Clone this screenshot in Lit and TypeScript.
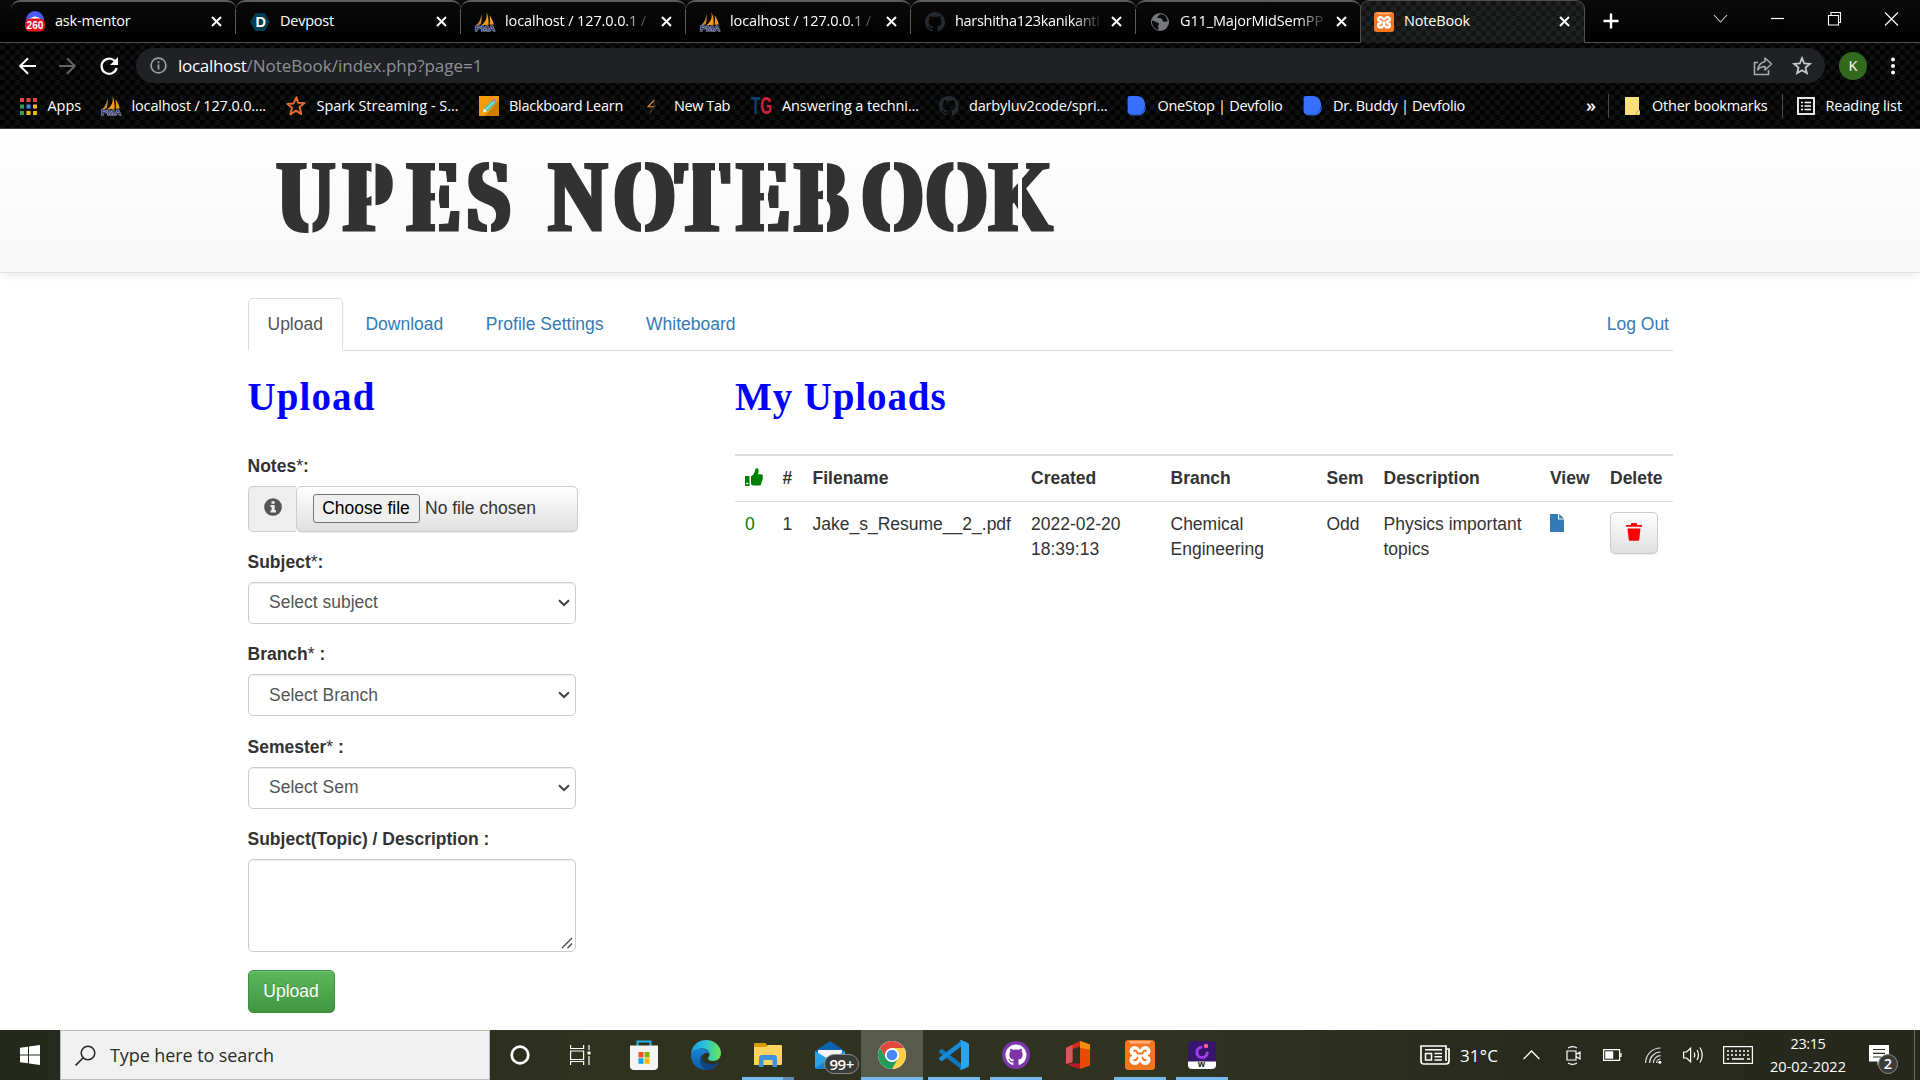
import { LitElement, html, svg, css } from "lit";
import { customElement } from "lit/decorators.js";

/** Base element: spreads the letters of every [data-w] label over its given width. */
class FittedElement extends LitElement {
  firstUpdated() {
    this.renderRoot.querySelectorAll<HTMLElement>("[data-w]").forEach((el) => {
      const want = Number(el.dataset.w);
      const has = el.getBoundingClientRect().width;
      const count = (el.textContent || "").length;
      el.style.letterSpacing = `${(want - has) / count}px`;
    });
  }
}

const fit = (text: string, w: number) => html`<span class="fit" data-w=${w}>${text}</span>`;
const icon = (w: number, h: number, box: string, body: unknown) =>
  html`<svg width=${w} height=${h} viewBox=${box} fill="none">${body}</svg>`;

/* ---------- shared icons ---------- */
const octocat = svg`<path d="M8 0C3.58 0 0 3.58 0 8c0 3.54 2.29 6.53 5.47 7.59.4.07.55-.17.55-.38 0-.19-.01-.82-.01-1.49-2.01.37-2.53-.49-2.69-.94-.09-.23-.48-.94-.82-1.13-.28-.15-.68-.52-.01-.53.63-.01 1.08.58 1.23.82.72 1.21 1.87.87 2.33.66.07-.52.28-.87.51-1.07-1.78-.2-3.64-.89-3.64-3.95 0-.87.31-1.59.82-2.15-.08-.2-.36-1.02.08-2.12 0 0 .67-.21 2.2.82.64-.18 1.32-.27 2-.27s1.36.09 2 .27c1.53-1.04 2.2-.82 2.2-.82.44 1.1.16 1.92.08 2.12.51.56.82 1.27.82 2.15 0 3.07-1.87 3.75-3.65 3.95.29.25.54.73.54 1.48 0 1.07-.01 1.93-.01 2.2 0 .21.15.46.55.38A8.01 8.01 0 0 0 16 8c0-4.42-3.58-8-8-8z" fill="currentColor"/>`;

const pma = () => icon(20, 20, "0 0 20 20", svg`
  <path d="M6 1.5C6.3 6 5 10 1 13.2L5.6 12.6C7 9 7 5 6 1.5z" fill="#c98b35"/>
  <path d="M11.3 0C12.4 5 11.6 9 6.4 13.2L13.6 12.8C13.8 8 13.3 3.400 11.3 0z" fill="#f89c0e"/>
  <path d="M14.400 3C16.500 6 18.400 9.500 18.800 12.6L14.6 12.8C15.2 9.500 15 6 14.4 3z" fill="#e8982a"/>
  <text x="0" y="19.400" font-family="Liberation Sans" font-weight="bold" font-size="8" textLength="20" lengthAdjust="spacingAndGlyphs" fill="#343b70" stroke="#b4b8d8" stroke-width=".9" paint-order="stroke">PMA</text>`);

const xampp = (s: number, h: number) => icon(s, h, "0 0 30 30", svg`
  <rect width="30" height="30" rx="3.500" fill="#f4761e"/><path d="M3 1h24l-3 2.500H6z" fill="#fbb27c"/>
  <circle cx="9.800" cy="11.200" r="5.300" fill="#fff"/><circle cx="20.200" cy="11.200" r="5.300" fill="#fff"/>
  <circle cx="9.800" cy="19.800" r="5.300" fill="#fff"/><circle cx="20.200" cy="19.800" r="5.300" fill="#fff"/>
  <path d="M10 10.500h10v10H10z" fill="#fff"/>
  <path d="M9 10.800q3-.5 3.500 2.700h5q.5-3.200 3.500-2.700M9 20.200q3 .5 3.500-2.700M21 20.200q-3 .5-3.500-2.700" stroke="#f4761e" stroke-width="1.800" stroke-linecap="round"/>
  <path d="M4 15.500h3M23 15.500h3" stroke="#f4761e" stroke-width="1.600"/>`);

const devfolio = () => icon(20, 20, "0 0 20 20", svg`
  <path d="M1.500 16.500h9.500c5 0 7.500-4 7.700-7.500C19.800 16 15.500 19.600 11 19.600H5.500C3.500 19.600 2 18.500 1.500 16.500z" fill="#2d5fd8"/>
  <path d="M.6 2C.6.8 1.500 0 2.600 0h7.200c5.200 0 8.300 4 8.300 8.800S15 17.800 9.800 17.800H2.600c-1.100 0-2-.9-2-2z" fill="#3770ff"/>`);

const cross = () => icon(11, 11, "0 0 11 11", svg`<path d="M1 1l9 9M10 1l-9 9" stroke="#fff" stroke-width="2"/>`);

/* ---------- browser chrome ---------- */
const favicons: Record<string, () => unknown> = {
  mentor: () => icon(20, 21, "0 0 20 21", svg`<circle cx="10" cy="9" r="9" fill="#4a5cf0"/><path d="M4 8q6-5 12 0z" fill="#fff"/>
    <rect x="0" y="7.600" width="20" height="13" rx="5" fill="#de1220"/>
    <text x="1.600" y="18.300" font-family="Liberation Sans" font-size="11" font-weight="bold" fill="#fff" textLength="16.800" lengthAdjust="spacingAndGlyphs">260</text>`),
  devpost: () => icon(20, 20, "0 0 20 20", svg`<path d="M5.300 1h9.400L20 10l-5.300 9H5.300L0 10z" fill="#003e54"/>
    <text x="5.400" y="15.200" font-family="Liberation Sans" font-size="14.500" font-weight="bold" fill="#fff">D</text>`),
  pma,
  github: () => html`<span class="gh">${icon(20, 20, "0 0 16 16", octocat)}</span>`,
  globe: () => icon(20, 20, "0 0 20 20", svg`<circle cx="10" cy="10" r="9" fill="#75797e"/>
    <path d="M2 8.500c3 .2 3.500 2 6 2.300 1.500.4 1 2.200 0 2.700l.6 4.200C4 17.500 1.500 13 2 8.500zM9.500 2.500c-.2 1.500-2 1.300-2.300 3 .6 1.400 3 .3 4.300 1.200 1.400 1 .6 2.800 2.500 3.100 1.300.2 2.500-.6 3.600-.2C17.500 5 14 1.600 9.500 2.500z" fill="#0a0a0a"/>`),
  xampp: () => xampp(20, 20),
};

const tabs: [string, string, number][] = [
  ["mentor", "ask-mentor", 75.5],
  ["devpost", "Devpost", 54],
  ["pma", "localhost / 127.0.0.1 /", 141],
  ["pma", "localhost / 127.0.0.1 /", 141],
  ["github", "harshitha123kanikanti", 144.5],
  ["globe", "G11_MajorMidSemPP", 143],
  ["xampp", "NoteBook", 66],
];

const marks: [() => unknown, string, number, number][] = [
  [() => icon(17, 17, "0 0 17 17", [["#e8453c", 0, 0], ["#e8453c", 6.5, 0], ["#e8453c", 13, 0], ["#2aa652", 0, 6.5], ["#4285f4", 6.5, 6.5], ["#f7b80e", 13, 6.5], ["#2aa652", 0, 13], ["#f7b80e", 6.500, 13], ["#f7b80e", 13, 13]].map(
    ([c, x, y]) => svg`<rect x=${x} y=${y} width="4" height="4" fill=${c}/>`)), "Apps", 33.5, 81.5],
  [pma, "localhost / 127.0.0....", 134.5, 185],
  [() => icon(20, 20, "0 0 20 20", svg`<path d="M10.500 1.200l1.600 5.500 6.400.2-5 4.200 1.800 7-5.300-3.500-5.600 3.800 1.600-6.700L1.500 8l6-.6z" stroke="#e06a32" stroke-width="2" stroke-linejoin="round"/>`), "Spark Streaming - S...", 142, 192.5],
  [() => icon(20, 20, "0 0 20 20", svg`<rect width="20" height="20" fill="#f79a0a"/><path d="M20 4v16H6z" fill="#cf7c00"/><path d="M4 16.500l1-4L13.500 4l3 3L8 15.500z" fill="#3fc7b4"/><path d="M13.500 4l1.500-1.500 3 3L16.500 7z" fill="#b678d6"/><path d="M4 16.500l1-4 3 3z" fill="#fff"/><path d="M6.500 14l8.500-8.500" stroke="#d8fff7" stroke-width="1"/>`), "Blackboard Learn", 114, 165],
  [() => icon(20, 20, "0 0 20 20", svg`<path d="M10.500 4L4 10.800h6" stroke="#d9973a" stroke-width="1.100"/><path d="M10.500 4l-.8 5.500h2L6 17.500l1.600-6.500" stroke="#4c3a28" stroke-width=".9"/>`), "New Tab", 56, 107],
  [() => icon(21, 20, "0 0 21 20", svg`<text x="0" y="17.600" font-family="Liberation Sans" font-weight="bold" font-size="23" fill="#123f73" textLength="21" lengthAdjust="spacingAndGlyphs">T<tspan fill="#d3203f">G</tspan></text>`), "Answering a techni...", 137, 188],
  [() => html`<span class="gh">${icon(20, 20, "0 0 16 16", octocat)}</span>`, "darbyluv2code/spri...", 138.500, 188.5],
  [devfolio, "OneStop | Devfolio", 125, 175.5],
  [devfolio, "Dr. Buddy | Devfolio", 132, 283.5],
];

@customElement("browser-chrome")
export class BrowserChrome extends FittedElement {
  static styles = css`
    :host { display: block; height: 129px; box-sizing: border-box; color: #fff; border-bottom: 1px solid #3a3a3a;
      font: 14.5px/20px "Open Sans", "Noto Sans", sans-serif; background: #050505 conic-gradient(#0e0f0f 25%, #030303 0 50%, #0e0f0f 0 75%, #030303 0) 0 0 / 10px 10px; }
    svg { display: block; flex: none; overflow: visible; }
    .fit { display: inline-block; white-space: pre; }
    .strip { display: flex; height: 42px; border-bottom: 1px solid #505050; background: #000 linear-gradient(#0a0a0a, #000); }
    .tabs { display: flex; padding-left: 11px; }
    .tab { display: flex; align-items: center; width: 225px; height: 42px; box-sizing: border-box; padding: 0 0 1px 14px; border-top: 2px solid #5c5c5c; border-radius: 9px 9px 0 0; }
    .tab:nth-child(n+2):nth-child(-n+6) .edge { background: #5a5a5a; }
    .edge { width: 1px; height: 25px; margin-left: -15px; margin-right: 14px; flex: none; }
    .name { flex: none; width: 146px; margin-left: 10px; white-space: nowrap; height: 21px; }
    .fade { -webkit-mask-image: linear-gradient(90deg, #000 118px, transparent 148px); mask-image: linear-gradient(90deg, #000 118px, transparent 148px); }
    .tab > svg:last-child { margin-left: 9.5px; }
    .active { height: 43px; border: 1px solid #505050; border-bottom: 0; border-radius: 9px 9px 0 0; margin-left: -1px; padding-top: 0; padding-left: 13px;
      background: #111 conic-gradient(#202222 25%, #141515 0 50%, #202222 0 75%, #141515 0) 0 0 / 10px 10px; }
    .active .edge { visibility: hidden; }
    .active > svg:last-child { margin-left: 8.5px; }
    .plus { margin: 13px 0 0 18px; }
    .win { display: flex; margin: 9px 0 0 auto; gap: 37px; padding-right: 19px; }
    .gh { color: #23292f; }
    .bar { display: flex; align-items: center; height: 45px; padding-left: 17.5px; }
    .omni { display: flex; align-items: center; width: 1689px; height: 35px; box-sizing: border-box; margin-left: 16.500px; padding: 0 12px 0 14px; border-radius: 18px; background: #202124; font-size: 17px; }
    .url { margin-left: 11px; flex: 1; color: #8e9195; }
    .url b { font-weight: 400; color: #fff; }
    .avatar { display: flex; justify-content: center; width: 28px; height: 28px; border-radius: 50%; background: #33691e; line-height: 27px; margin: 0 24px 0 14px; }
    .marks { display: flex; align-items: center; height: 36px; padding-left: 19.5px; }
    .mark { display: flex; align-items: center; gap: 10.5px; }
    .mark:first-child { gap: 11px; }
    .line { width: 1px; height: 24px; background: #4a4a4a; }
    .more { width: 22px; font-size: 18px; font-weight: 600; margin-top: -3px; }
    .other { gap: 12px; margin: 0 14px 0 15px; }
    .read { gap: 11px; margin-left: 14px; }
  `;
  render() {
    return html`
      <div class="strip">
        <div class="tabs">
          ${tabs.map(([ic, name, w], i) => html`<div class="tab ${i === 6 ? "active" : ""}"><i class="edge"></i>${favicons[ic]()}
            <div class="name ${w > 100 ? "fade" : ""}">${fit(name, w)}</div>${cross()}</div>`)}
        </div>
        <div class="plus">${icon(16, 16, "0 0 16 16", svg`<path d="M8 0.500v15M.5 8h15" stroke="#fff" stroke-width="2.400"/>`)}</div>
        <div class="win">
          ${icon(20, 20, "0 0 20 20", svg`<path d="M4 6l6.500 7L17 6" stroke="#ccc" stroke-width="1.100"/>`)}
          ${icon(20, 20, "0 0 20 20", svg`<path d="M4 9.500h13" stroke="#fff" stroke-width="1.200"/>`)}
          ${icon(20, 20, "0 0 20 20", svg`<path d="M4.500 6.500h10v9.500h-10zM7 6.500V3.500h9.500v10h-2" stroke="#fff" stroke-width="1.100"/>`)}
          ${icon(20, 20, "0 0 20 20", svg`<path d="M4 3.500l13 13M17 3.500l-13 13" stroke="#fff" stroke-width="1.100"/>`)}
        </div>
      </div>
      <div class="bar">
        ${icon(20, 20, "0 0 20 20", svg`<path d="M18 10H2.500M10 2.200L2.200 10l7.800 7.800" stroke="#fff" stroke-width="2"/>`)}
        <span style="width:20px"></span>
        ${icon(20, 20, "0 0 20 20", svg`<path d="M1 10h15.500M9 2.200l7.800 7.800L9 17.800" stroke="#626466" stroke-width="2"/>`)}
        <span style="width:20px"></span>
        ${icon(22, 20, "0 0 22 20", svg`<path d="M18.200 7.200A7.600 7.600 0 1 0 18.600 12" stroke="#fff" stroke-width="2.200"/><path d="M20 1v8h-8z" fill="#fff"/>`)}
        <div class="omni">
          ${icon(17, 17, "0 0 17 17", svg`<circle cx="8.500" cy="8.500" r="7.400" stroke="#9aa0a6" stroke-width="1.700"/><path d="M8.500 7.500v5M8.500 4.300v2" stroke="#9aa0a6" stroke-width="1.800"/>`)}
          <div class="url"><span class="fit"><b data-w="68.500">localhost</b><span data-w="236">/NoteBook/index.php?page=1</span></span></div>
          ${icon(22, 22, "0 0 22 22", svg`<path d="M6 7.500H2.500v12h14V15" stroke="#a9adb1" stroke-width="1.600"/><path d="M13 3l6.500 6-6.500 6v-3.500c-3 0-5.500 1-7.200 3.500.4-4.500 3-7.500 7.200-8.500z" stroke="#a9adb1" stroke-width="1.500" stroke-linejoin="round"/>`)}
          <span style="width:17px"></span>
          ${icon(22, 22, "0 0 22 22", svg`<path d="M11 3.200l2.200 5.300 5.700.4-4.400 3.700 1.400 5.600-4.900-3-4.900 3 1.400-5.600-4.400-3.700 5.700-.4z" stroke="#c8cbce" stroke-width="1.800"/>`)}
        </div>
        <div class="avatar">K</div>
        ${icon(4, 18, "0 0 4 18", svg`<circle cx="2" cy="2.500" r="2" fill="#fff"/><circle cx="2" cy="9" r="2" fill="#fff"/><circle cx="2" cy="15.500" r="2" fill="#fff"/>`)}
      </div>
      <div class="marks">
        ${marks.map(([ic, name, w, span]) => html`<div class="mark" style="width:${span}px">${ic()}${fit(name, w)}</div>`)}
        <div class="more">»</div><i class="line"></i>
        <div class="mark other">${icon(16, 18, "0 0 16 18", svg`<path d="M1 0h14v13l1 1v3l-1 1H1z" fill="#fbdf7c"/><path d="M12 18l1-4h3" stroke="#d9b13a"/>`)}${fit("Other bookmarks", 115.5)}</div>
        <i class="line"></i>
        <div class="mark read">${icon(18, 18, "0 0 18 18", svg`<rect x="1" y="1" width="16" height="16" stroke="#fff" stroke-width="1.800"/><path d="M4 5.500h2M4 9h2M4 12.500h2M7.500 5.500H14M7.500 9H14M7.500 12.500H14" stroke="#fff" stroke-width="1.700"/>`)}${fit("Reading list", 76.500)}</div>
      </div>`;
  }
}

/* ---------- page ---------- */
const glyphX = [276, 342.5, 406.5, 465.5, 525, 548, 612.5, 674.5, 736, 794, 860.5, 924.5, 988.5];

@customElement("stencil-title")
export class StencilTitle extends LitElement {
  static styles = css`
    :host { display: block; }
    svg { display: block; overflow: visible; }
    text { font: bold 101px "Liberation Serif", serif; fill: #333; stroke: #333; stroke-width: 2px; }
  `;
  render() {
    const k = 0.79;
    const xs = glyphX.map((x) => ((x + 1 - 270) / k).toFixed(1)).join(" ");
    /* [left, top, height] of every bridge cut out of the letters */
    const cuts = [
      [308.5, 40, 40], [371.5, 0, 50], [435, 0, 80], [489, 0, 12], [487, 62, 18],
      [641, 0, 80], [688.5, 0, 24], [715, 0, 24], [764, 0, 80], [823, 0, 80],
      [890, 0, 80], [953.5, 0, 80], [1018, 0, 80],
    ];
    return html`<svg width="800" height="80" viewBox="0 0 800 80">
      <defs>
        <filter id="heavy" x="-5%" y="-20%" width="110%" height="140%"><feMorphology operator="dilate" radius="2.400 0.001"/></filter>
        <mask id="cut" maskUnits="userSpaceOnUse" x="0" y="0" width="800" height="80"><rect width="800" height="80" fill="#fff"/>
          ${cuts.map(([x, y, h]) => svg`<rect x=${x - 270} y=${y} width="4" height=${h} fill="#000"/>`)}
        </mask>
      </defs>
      <g mask="url(#cut)"><g filter="url(#heavy)"><text transform="scale(${k} 1)" x=${xs} y="71">UPES NOTEBOOK</text></g></g>
    </svg>`;
  }
}

const selects: [string, string, string][] = [
  ["Subject", ":", "Select subject"],
  ["Branch", " :", "Select Branch"],
  ["Semester", " :", "Select Sem"],
];

@customElement("notebook-page")
export class NotebookPage extends FittedElement {
  static styles = css`
    :host { display: block; height: 901px; overflow: hidden; background: #fff; color: #333; font: 17.5px/25px "Liberation Sans", Arial, sans-serif; }
    svg { display: block; }
    .fit { display: inline-block; white-space: pre; }
    .head { height: 144px; box-sizing: border-box; padding: 31px 0 0 270px; border-bottom: 1px solid #e2e2e2; background: linear-gradient(#fff, #f7f7f7); box-shadow: 0 1px 10px rgba(0,0,0,.1); }
    .wrap { width: 1425px; margin: 25px auto 0; }
    .nav { display: flex; height: 53px; box-sizing: border-box; border-bottom: 1px solid #ddd; gap: 2.5px; }
    .nav a { padding: 13px 19px 12px; border: 1px solid transparent; height: 26px; color: #337ab7; }
    .nav .on { color: #555; border-color: #ddd; border-bottom-color: #fff; background: #fff; border-radius: 5px 5px 0 0; }
    .nav .out { margin-left: auto; padding-right: 2.500px; }
    .cols { display: flex; }
    .form { width: 330px; margin-right: 157.5px; }
    h2 { margin: 22px 0 0; height: 48px; color: #00f; font: bold 39px/48px "Liberation Serif", serif; }
    label { display: block; height: 25px; font-weight: 700; white-space: pre; }
    label i { font-weight: 400; font-style: normal; }
    .notes { margin-top: 33px; }
    .group { display: flex; margin: 7px 0 -.8px; height: 46px; }
    .addon { width: 48px; box-sizing: border-box; border: 1px solid #ccc; border-right: 0; border-radius: 5px 0 0 5px; background: #eee; padding: 11px 0 0 15px; }
    .file { flex: 1; display: flex; border: 1px solid #ccc; border-radius: 5px; padding: 7px 0 0 16px; gap: 5.5px; background: linear-gradient(#fff, #e0e0e0); color: #333; box-shadow: 0 1px 1px rgba(0,0,0,.06); }
    .choose { box-sizing: border-box; width: 107px; height: 29px; border: 1px solid #767676; border-radius: 3px; background: #efefef; color: #000; text-align: center; line-height: 26px; }
    .chosen { line-height: 28px; }
    .field { margin-top: 18.5px; }
    .pick { display: flex; justify-content: space-between; align-items: center; width: 328px; height: 42px; box-sizing: border-box; margin-top: 7px; padding: 0 5px 0 20.5px; border: 1px solid #ccc; border-radius: 5px; color: #555; box-shadow: inset 0 1px 1px rgba(0,0,0,.075); }
    .area { height: 93px; align-items: flex-end; padding: 0 2px 2px; }
    .send { width: 87px; height: 43px; box-sizing: border-box; margin-top: 17.5px; border: 1px solid #3e8f3e; border-radius: 5px; background: linear-gradient(#5cb85c, #419641); color: #fff; text-align: center; line-height: 41px; text-shadow: 0 -1px 0 rgba(0,0,0,.2); box-shadow: inset 0 1px 0 rgba(255,255,255,.15); }
    .list { flex: 1; }
    .grid { display: grid; grid-template-columns: 37.5px 30px 218.5px 139.500px 156px 57px 166.500px 60px 1fr; margin-top: 33px; border-top: 2px solid #ddd; }
    .grid > div { padding: 10px 0 10px 10px; }
    .th { font-weight: 700; border-bottom: 1px solid #ddd; height: 24.5px; }
    .green { color: green; }
    .del { display: grid; place-items: center; width: 46px; height: 40px; border: 1px solid #ccc; border-radius: 5px; background: linear-gradient(#fff, #e0e0e0); box-shadow: inset 0 1px 0 rgba(255,255,255,.15), 0 1px 1px rgba(0,0,0,.075); }
    .del svg { margin-top: -1px; }
    .up { margin-top: 2px; }
    .doc { margin-top: 2px; }
  `;
  render() {
    const heads = ["#", "Filename", "Created", "Branch", "Sem", "Description", "View", "Delete"];
    return html`
      <div class="head"><stencil-title></stencil-title></div>
      <div class="wrap">
        <div class="nav"><a class="on">Upload</a><a>Download</a><a>Profile Settings</a><a>Whiteboard</a><a class="out">Log Out</a></div>
        <div class="cols">
          <div class="form">
            <h2>${fit("Upload", 128)}</h2>
            <label class="notes">Notes<i>*</i>:</label>
            <div class="group">
              <div class="addon">${icon(18, 18, "0 0 18 18", svg`<circle cx="9" cy="9" r="8.800" fill="#555"/><path d="M7.500 3.200h3.200v2.500H7.500zM6.500 7h4.200v5.200h1.300V14.500H6.500v-2.300h1.200V9.300H6.500z" fill="#eee"/>`)}</div>
              <div class="file"><span class="choose">Choose file</span><span class="chosen">No file chosen</span></div>
            </div>
            ${selects.map(([name, tail, value]) => html`<div class="field"><label>${name}<i>*</i>${tail}</label>
              <div class="pick">${value}${icon(12, 8, "0 0 12 8", svg`<path d="M1 1.200l5 4.800 5-4.800" stroke="#444" stroke-width="2"/>`)}</div></div>`)}
            <div class="field"><label>Subject(Topic) / Description :</label>
              <div class="pick area"><span></span>${icon(12, 12, "0 0 12 12", svg`<path d="M1 11L11 1M6.500 11L11 6.500" stroke="#444" stroke-width="1.300"/>`)}</div></div>
            <div class="send">Upload</div>
          </div>
          <div class="list">
            <h2>${fit("My Uploads", 211.5)}</h2>
            <div class="grid">
              <div class="th"><div class="up">${icon(18, 18, "0 0 18 18", svg`<path d="M0 8h4.500v10H0z" fill="green"/><circle cx="2.200" cy="15.500" r="1" fill="#fff"/><path d="M6 8.500c2-1.500 3.600-3.400 4-6C10.300.8 11 0 12.300.3c1.900.5 1.700 3.500.6 6H16c2.200 0 2.300 2 1.400 2.900.9.900.4 2.400-.4 2.700.6 1 .1 2.100-.7 2.500.4 1.300-.2 3.200-2.600 3.200H9.500C7.800 17.600 7 17 6 16z" fill="green"/>`)}</div></div>
              ${heads.map((h) => html`<div class="th">${h}</div>`)}
              <div class="green">0</div><div>1</div><div>Jake_s_Resume__2_.pdf</div><div>2022-02-20<br>18:39:13</div><div>Chemical<br>Engineering</div><div>Odd</div><div>Physics important<br>topics</div>
              <div><div class="doc">${icon(14, 18, "0 0 14 18", svg`<path d="M0 0h8v5.500h6V18H0z" fill="#337ab7"/><path d="M9.200 0L14 4.500H9.200z" fill="#337ab7"/>`)}</div></div>
              <div><div class="del">${icon(16, 18, "0 0 16 18", svg`<path d="M0 2h5V.8Q5 0 6 0h4q1 0 1 .8V2h5v1.800H0zM1.500 5.500h13L13.200 17q-.1.800-1 .8H3.800q-.9 0-1-.8z" fill="red"/>`)}</div></div>
            </div>
          </div>
        </div>
      </div>`;
  }
}

/* ---------- taskbar ---------- */
const apps: [string, unknown][] = [
  ["", icon(30, 30, "0 0 30 30", svg`<path d="M8.500 7V1.500h13V7" stroke="#22b4ea" stroke-width="2"/><path d="M1 5.500h28V26q0 4-4 4H5q-4 0-4-4z" fill="#f4f4f4"/><path d="M9.500 12h5v5.500h-5z" fill="#f25022"/><path d="M15.500 12h5v5.500h-5z" fill="#7fba00"/><path d="M9.500 18.300h5v5.500h-5z" fill="#00a4ef"/><path d="M15.500 18.300h5v5.500h-5z" fill="#ffb900"/>`)],
  ["", icon(30, 30, "0 0 30 30", svg`<defs><linearGradient id="e1"><stop stop-color="#1b9de2"/><stop offset=".5" stop-color="#2cc4d4"/><stop offset="1" stop-color="#6bea4c"/></linearGradient><linearGradient id="e2" x2="0" y2="1"><stop stop-color="#1a86d9"/><stop offset="1" stop-color="#0c59a4"/></linearGradient></defs>
    <path d="M0 15C0 6 7 0 15 0c9 0 15 6.500 15 13 0 5-3.500 8-8 8-3.500 0-5-1.500-5-2.500 0-1.300 1.500-1.800 1.500-4.500 0-3-3-5.500-7-5.500C6 8.500 1.500 11 0 15z" fill="url(#e1)"/>
    <path d="M0 15c1.500-4 5.500-6.500 10.500-6.500 4 0 7.500 2.500 8 5.500-2-2-8-1-8 5 0 6.500 6.500 9.500 13 7.500-2 2-5 3.500-8.500 3.500C7 30 0 24 0 15z" fill="url(#e2)"/>
    <path d="M11 14c-4 5-2 13 5 16 5 0 9-2.500 11.800-6.500.4-.8-.3-1.100-.8-.8C18 27 9 22 11 14z" fill="#10457f"/>`)],
  ["run multi", icon(28, 24, "0 0 28 24", svg`<path d="M0 1q0-1 1-1h10.500l2 2.500V8H0z" fill="#d99c00"/><path d="M0 4h12l2-2h13q1 0 1 1v18q0 1-1 1H0z" fill="#ffd45e"/><path d="M5 24V15q0-3 3-3h12q3 0 3 3v9h-4.500v-6q0-1-1-1h-7q-1 0-1 1v6z" fill="#3f93dc"/>`)],
  ["mail", html`${icon(30, 30, "0 0 30 30", svg`<path d="M0 11L15 1l15 10v16q0 2-2 2H2q-2 0-2-2z" fill="#0b62ae"/><path d="M3 10h24v12H3z" fill="#f3f3f3"/><path d="M0 11l15 9 15-9v16q0 2-2 2H2q-2 0-2-2z" fill="#2aa3e6"/><path d="M0 28l15-9 8 10H2z" fill="#1682d1"/>`)}<span class="count">99+</span>`],
  ["run on", icon(28, 28, "0 0 28 28", svg`<circle cx="14" cy="14" r="14" fill="#fff"/><path d="M1.900 7A14 14 0 0 1 26.100 7H14a7 7 0 0 0-6.060 10.500z" fill="#de4a3d"/><path d="M26.100 7A14 14 0 0 1 14 28l6.060-10.500A7 7 0 0 0 14 7z" fill="#fcce45"/><path d="M14 28A14 14 0 0 1 1.900 7l6.060 10.500A7 7 0 0 0 20.060 17.500z" fill="#1e9c58"/><circle cx="14" cy="14" r="6.600" fill="#fff"/><circle cx="14" cy="14" r="5.300" fill="#4687f3"/>`)],
  ["run", icon(30, 30, "0 0 30 30", svg`<path d="M0 11l2-1.800q.8-.5 1.600 0L22 23.500V29L.4 12.500Q-.4 11.600 0 11z" fill="#0f76bf"/><path d="M0 19l2 1.800q.8.5 1.600 0L22 6.500V1L.4 17.500Q-.4 18.400 0 19z" fill="#178dd9"/><path d="M22 0l7 3q1 .5 1 1.500v21q0 1-1 1.500l-7 3q-1 0-1.500-.8.9.3 1.500-.7V1.500q-.6-1-1.500-.7Q21 0 22 0z" fill="#2aa4f0"/>`)],
  ["run hub", icon(28, 28, "0 0 28 28", svg`<circle cx="14" cy="14" r="14" fill="#7d35a8"/><g transform="translate(3.500 3.500) scale(1.310)" color="#fff">${octocat}</g>`)],
  ["", icon(24, 28, "0 0 24 28", svg`<path d="M0 7L14 0v5.500L6.500 8v13L0 23z" fill="#d7281e"/><path d="M14 0l10 3.500v21L14 28z" fill="#e74a08"/><path d="M14 0l10 3.500v5L14 7z" fill="#f78d0c"/><path d="M3 22.500h11V28L3 24.500z" fill="#c0182a"/><path d="M0 7l6.500-3.200V21L0 23z" fill="#e0535c"/>`)],
  ["run", xampp(30, 30)],
  ["run", icon(28, 28, "0 0 28 28", svg`<rect width="28" height="28" rx="4" fill="#35166a"/><path d="M0 20.500h28V24q0 4-4 4H4q-4 0-4-4z" fill="#fff"/><path d="M13 6.200A5.200 5.200 0 1 0 19.200 12" stroke="#a33af0" stroke-width="3" stroke-linecap="round"/><circle cx="18" cy="5" r="2.200" fill="#ff5f8f"/><text x="10" y="26" font-family="Liberation Sans" font-weight="bold" font-size="9" fill="#111">w</text>`)],
];

@customElement("task-bar")
export class TaskBar extends FittedElement {
  static styles = css`
    :host { display: flex; height: 50px; align-items: center; color: #fff; background: linear-gradient(90deg, #232a1d, #30321f 32%, #303322 60%, #282a1d 80%, #27281d); font: 16px/23px "Open Sans", "Noto Sans", sans-serif; }
    svg { display: block; flex: none; }
    .fit { display: inline-block; white-space: pre; }
    .start { width: 40px; padding-left: 20px; }
    .search { display: flex; align-items: center; gap: 14px; width: 430px; height: 50px; box-sizing: border-box; padding-left: 14px; border: 1px solid #bbb; background: #f1f1f1; color: #2b2b2b; font-size: 18px; }
    .cell { display: grid; place-items: center; width: 60px; height: 50px; }
    .apps { display: flex; margin-left: 3px; }
    .app { position: relative; display: grid; place-items: center; width: 62.05px; height: 50px; box-sizing: border-box; border: solid transparent; border-width: 0 5px; }
    .run { background: linear-gradient(#76b9ed, #76b9ed) bottom / 100% 3px no-repeat padding-box; }
    .multi { background: linear-gradient(90deg, #76b9ed 41px, #5c8bb5 0) bottom / 100% 3px no-repeat padding-box; }
    .on { border-width: 0; background: linear-gradient(#76b9ed, #76b9ed) bottom / 100% 3px no-repeat, #585b4c; }
    .count { position: absolute; left: 20px; top: 24px; width: 35px; height: 20px; box-sizing: border-box; border: 1px solid #8a8a8a; border-radius: 10px; background: #393b38; font: 600 15px/18px "Open Sans", sans-serif; text-align: center; letter-spacing: -.5px; }
    .tray { display: flex; align-items: center; margin-left: auto; }
    .temp { margin: 0 25px 0 10px; font-size: 17px; height: 23px; }
    .clock { display: flex; flex-direction: column; align-items: center; width: 78px; margin: 0 22px 0 16px; font-size: 14.5px; }
    .note { position: relative; width: 45px; height: 20px; }
    .dot { position: absolute; left: 9px; top: 9px; width: 20px; height: 20px; box-sizing: border-box; border: 1px solid #888; border-radius: 50%; background: #3b3d3a; font: 600 14.5px/18px "Open Sans", sans-serif; text-align: center; }
    .end { width: 6px; height: 50px; box-sizing: border-box; border-left: 1px solid #6c6d66; }
    .g1 { margin-right: 26px; } .g2 { margin-right: 22px; } .g3 { margin-right: 23px; } .g4 { margin-right: 21px; } .g5 { margin-right: 19px; }
  `;
  render() {
    return html`
      <div class="start">${icon(20, 20, "0 0 20 20", svg`<path d="M0 2.800l8-1.100v7.800H0zM9 1.500L20 0v9.500H9zM0 10.500h8v7.800l-8-1.100zM9 10.500h11V20L9 18.500z" fill="#fff"/>`)}</div>
      <div class="search">${icon(21, 21, "0 0 21 21", svg`<circle cx="13" cy="8" r="6.800" stroke="#222" stroke-width="1.500"/><path d="M8 13L.6 20.400" stroke="#222" stroke-width="1.500"/>`)}${fit("Type here to search", 164)}</div>
      <div class="cell">${icon(20, 20, "0 0 20 20", svg`<circle cx="10" cy="10" r="8.300" stroke="#fff" stroke-width="2.700"/>`)}</div>
      <div class="cell">${icon(21, 20, "0 0 21 20", svg`<path d="M.6 0v3.500h13V0M.6 6h13v8.500H.6zM.6 20v-3.500h13V20M19 0v5M19 11v9" stroke="#fff" stroke-width="1.200"/><path d="M17.500 6.500h3v3h-3z" fill="#fff"/>`)}</div>
      <div class="apps">${apps.map(([cls, ic]) => html`<div class="app ${cls}">${ic}</div>`)}</div>
      <div class="tray">
        ${icon(30, 20, "0 0 30 20", svg`<path d="M26 4h3v12q0 3-3 3H4q-3 0-3-3V1h25v15" stroke="#fff" stroke-width="1.700"/><path d="M5 4.800h17M14.500 8.500H22M14.500 11.800H22M14.500 15H22" stroke="#fff" stroke-width="1.400"/><path d="M5.500 8.500h6v6.500h-6z" stroke="#fff" stroke-width="1.500"/>`)}
        <div class="temp">${fit("31°C", 38)}</div>
        <span class="g1">${icon(17, 10, "0 0 17 10", svg`<path d="M.6 9l7.900-8 7.900 8" stroke="#fff" stroke-width="1.300"/>`)}</span>
        <span class="g2">${icon(15, 19, "0 0 15 19", svg`<path d="M2 2q4.500-2.800 9 0M2 17q4.500 2.800 9 0M1 5h9v9H1zM10 8.500l4-2.500v7l-4-2.500" stroke="#fff" stroke-width="1.200"/>`)}</span>
        <span class="g3">${icon(19, 12, "0 0 19 12", svg`<path d="M.6.6h16v10.800H.6zM18 4v4" stroke="#fff" stroke-width="1.200"/><path d="M2.200 2.300h8v7.400h-8z" fill="#fff"/>`)}</span>
        <span class="g4">${icon(17, 17, "0 0 17 17", svg`<path d="M.6 16A15 15 0 0 1 15.600 1M4.600 16A11 11 0 0 1 15.600 5M8.300 16A7.300 7.300 0 0 1 15.600 8.700M11.600 16a4 4 0 0 1 4-4" stroke="#ddd" stroke-width="1.200"/><circle cx="14.800" cy="15.300" r="1.500" fill="#fff"/>`)}</span>
        <span class="g5">${icon(21, 18, "0 0 21 18", svg`<path d="M.6 6h3l4-3.800v13.600L3.600 12h-3zM11 6.500q1.500 2.500 0 5M14 4q3 5 0 10M17 1.500q4.500 7.500 0 15" stroke="#fff" stroke-width="1.200"/>`)}</span>
        ${icon(30, 18, "0 0 30 18", svg`<rect x=".6" y=".6" width="28.800" height="16.800" stroke="#fff" stroke-width="1.200"/><path d="M4 5h23M4 9h23" stroke="#fff" stroke-width="1.400" stroke-dasharray="2 2"/><path d="M4 13h2M9 13h12M24 13h3" stroke="#fff" stroke-width="1.400"/>`)}
        <div class="clock">${fit("23:15", 35)}${fit("20-02-2022", 76)}</div>
        <div class="note">${icon(20, 20, "0 0 20 20", svg`<path d="M0 0h20v16.500h-8L8.500 20v-3.500H0z" fill="#fff"/><path d="M4 4.500h12M4 8.300h12M4 12h8" stroke="#2b2c21" stroke-width="1.200"/>`)}<span class="dot">2</span></div>
        <div class="end"></div>
      </div>`;
  }
}

@customElement("app-root")
export class AppRoot extends LitElement {
  static styles = css`:host { display: block; width: 1920px; height: 1080px; overflow: hidden; background: #fff; }`;
  render() {
    return html`<browser-chrome></browser-chrome><notebook-page></notebook-page><task-bar></task-bar>`;
  }
}
